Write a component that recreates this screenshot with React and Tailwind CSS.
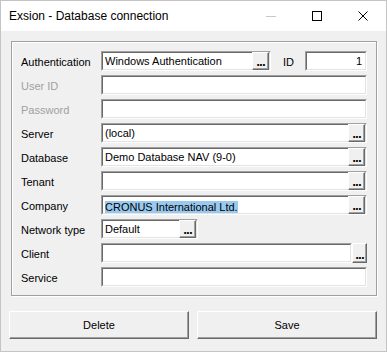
import React from "react";

function Box({ className = "", children }) {
  return (
    <div
      className={`h-5 border border-t-[#a0a0a0] border-l-[#a0a0a0] border-b-white border-r-white ${className}`}
    >
      <div className="flex h-full items-center border border-t-[#696969] border-l-[#696969] border-b-[#e3e3e3] border-r-[#e3e3e3] bg-white">
        {children}
      </div>
    </div>
  );
}

function Dots({ className = "" }) {
  return (
    <div
      className={`flex shrink-0 items-end justify-center border border-t-white border-l-white border-b-[#696969] border-r-[#696969] bg-[#f0f0f0] pb-[2px] shadow-[inset_-1px_-1px_0_#a0a0a0] ${className}`}
    >
      <span className="font-['DejaVu_Sans',sans-serif] text-[10px] font-bold leading-[8px] tracking-[-1px] text-black">
        ...
      </span>
    </div>
  );
}

function Row({ label, disabled, children }) {
  return (
    <div className="flex h-5 items-center">
      <span
        className={
          disabled
            ? "w-20 shrink-0 pt-[2px] text-[11px] text-[#a0a0a0]"
            : "w-20 shrink-0 pt-[2px] text-[11px] text-black"
        }
      >
        {label}
      </span>
      {children}
    </div>
  );
}

function Value({ children }) {
  return <span className="flex-1 truncate pl-[2px] pt-px text-[11px] text-black">{children}</span>;
}

export default function App() {
  return (
    <div className="flex h-[352px] w-[387px] flex-col border border-[#c4c4c4] bg-[#f0f0f0] font-['Liberation_Sans',Arial,sans-serif]">
      {/* title bar */}
      <div className="flex h-[30px] shrink-0 items-center bg-white pl-2">
        <span className="flex-1 text-[12px] text-black">Exsion - Database connection</span>
        <div className="flex h-full items-center">
          <div className="flex h-full w-[46px] items-center justify-center">
            <div className="h-px w-[10px] bg-[#c8c8c8]" />
          </div>
          <div className="flex h-full w-[46px] items-center justify-center">
            <div className="h-[10px] w-[10px] border border-black" />
          </div>
          <div className="flex h-full w-[46px] items-center justify-center">
            <svg width="10" height="10" viewBox="0 0 10 10">
              <path d="M0.5 0.5 L9.5 9.5 M9.5 0.5 L0.5 9.5" stroke="#000" strokeWidth="1" fill="none" />
            </svg>
          </div>
        </div>
      </div>

      {/* group box */}
      <div className="ml-[10px] mr-[9px] mt-[10px] flex flex-col gap-1 border border-[#a0a0a0] pb-2 pl-[9px] pr-[9px] pt-[9px] shadow-[1px_1px_0_#fff,inset_1px_1px_0_#fff]">
        <Row label="Authentication">
          <Box className="w-[170px]">
            <Value>Windows Authentication</Value>
            <Dots className="h-[18px] w-[17px]" />
          </Box>
          <span className="ml-3 w-[22px] pt-[2px] text-[11px] text-black">ID</span>
          <Box className="flex-1">
            <span className="flex-1 pr-[3px] pt-px text-right text-[11px] text-black">1</span>
          </Box>
        </Row>
        <Row label="User ID" disabled>
          <Box className="flex-1" />
        </Row>
        <Row label="Password" disabled>
          <Box className="flex-1" />
        </Row>
        <Row label="Server">
          <Box className="flex-1">
            <Value>(local)</Value>
            <Dots className="h-[18px] w-[17px]" />
          </Box>
        </Row>
        <Row label="Database">
          <Box className="flex-1">
            <Value>Demo Database NAV (9-0)</Value>
            <Dots className="h-[18px] w-[17px]" />
          </Box>
        </Row>
        <Row label="Tenant">
          <Box className="flex-1">
            <span className="flex-1" />
            <Dots className="h-[18px] w-[17px]" />
          </Box>
        </Row>
        <Row label="Company">
          <Box className="flex-1">
            <span className="flex-1 pl-[2px] pt-px">
              <span className="bg-[#99c9ef] text-[11px] text-black">CRONUS International Ltd.</span>
            </span>
            <Dots className="h-[18px] w-[17px]" />
          </Box>
        </Row>
        <Row label="Network type">
          <Box className="w-[97px]">
            <Value>Default</Value>
            <Dots className="h-[18px] w-[17px]" />
          </Box>
        </Row>
        <Row label="Client">
          <Box className="flex-1" />
          <Dots className="h-5 w-[15px]" />
        </Row>
        <Row label="Service">
          <Box className="flex-1" />
        </Row>
      </div>

      {/* buttons */}
      <div className="mt-[15px] flex gap-2 pl-2 pr-[9px]">
        <button className="flex h-[28px] flex-1 items-center justify-center border border-t-white border-l-white border-b-[#696969] border-r-[#696969] bg-[#f0f0f0] text-[11px] text-black shadow-[inset_-1px_-1px_0_#a0a0a0]">
          Delete
        </button>
        <button className="flex h-[28px] flex-1 items-center justify-center border border-t-white border-l-white border-b-[#696969] border-r-[#696969] bg-[#f0f0f0] text-[11px] text-black shadow-[inset_-1px_-1px_0_#a0a0a0]">
          Save
        </button>
      </div>
    </div>
  );
}
